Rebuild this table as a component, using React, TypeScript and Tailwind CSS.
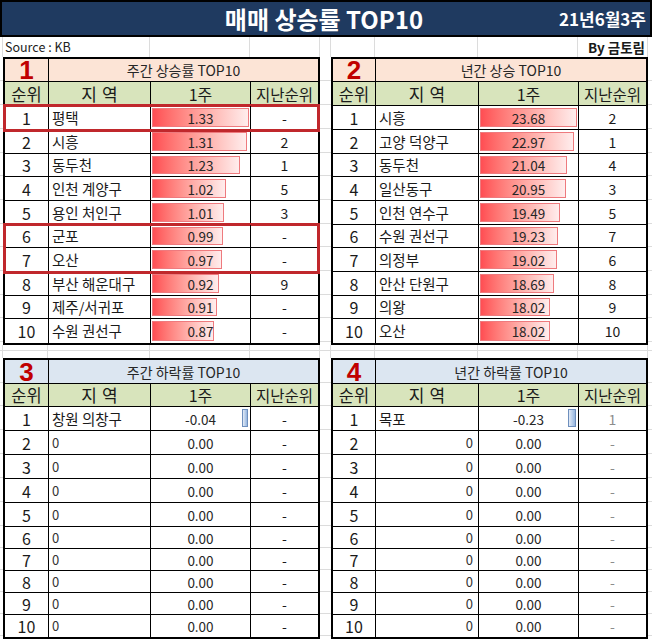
import React from 'react';

type Row = { rank: number; region: string; value: string; bar?: number; neg?: number; prev: string };

const H_TOP = ['h-[24px]', 'h-[24px]', 'h-[23px]', 'h-[24px]', 'h-[24px]', 'h-[23px]', 'h-[24px]', 'h-[24px]', 'h-[23px]', 'h-[24px]'];
const H_BOT = ['h-[24px]', 'h-[24px]', 'h-[24px]', 'h-[24px]', 'h-[24px]', 'h-[22px]', 'h-[22px]', 'h-[22px]', 'h-[22px]', 'h-[22px]'];

const COLS_L = ['w-[44px]', 'w-[102px]', 'w-[100px]'];
const COLS_R = ['w-[43px]', 'w-[103px]', 'w-[100px]'];

const t1: Row[] = [
  { rank: 1, region: '평택', value: '1.33', bar: 97, prev: '-' },
  { rank: 2, region: '시흥', value: '1.31', bar: 95, prev: '2' },
  { rank: 3, region: '동두천', value: '1.23', bar: 88, prev: '1' },
  { rank: 4, region: '인천 계양구', value: '1.02', bar: 74, prev: '5' },
  { rank: 5, region: '용인 처인구', value: '1.01', bar: 72, prev: '3' },
  { rank: 6, region: '군포', value: '0.99', bar: 71, prev: '-' },
  { rank: 7, region: '오산', value: '0.97', bar: 70, prev: '-' },
  { rank: 8, region: '부산 해운대구', value: '0.92', bar: 67, prev: '9' },
  { rank: 9, region: '제주/서귀포', value: '0.91', bar: 65, prev: '-' },
  { rank: 10, region: '수원 권선구', value: '0.87', bar: 62, prev: '-' },
];

const t2: Row[] = [
  { rank: 1, region: '시흥', value: '23.68', bar: 97, prev: '2' },
  { rank: 2, region: '고양 덕양구', value: '22.97', bar: 94, prev: '1' },
  { rank: 3, region: '동두천', value: '21.04', bar: 87, prev: '4' },
  { rank: 4, region: '일산동구', value: '20.95', bar: 86, prev: '3' },
  { rank: 5, region: '인천 연수구', value: '19.49', bar: 80, prev: '5' },
  { rank: 6, region: '수원 권선구', value: '19.23', bar: 78, prev: '7' },
  { rank: 7, region: '의정부', value: '19.02', bar: 77, prev: '6' },
  { rank: 8, region: '안산 단원구', value: '18.69', bar: 74, prev: '8' },
  { rank: 9, region: '의왕', value: '18.02', bar: 70, prev: '9' },
  { rank: 10, region: '오산', value: '18.02', bar: 70, prev: '10' },
];

const zeros = (first: Row): Row[] => [
  first,
  ...Array.from({ length: 9 }, (_, i) => ({ rank: i + 2, region: '0', value: '0.00', prev: '-' })),
];

const t3 = zeros({ rank: 1, region: '창원 의창구', value: '-0.04', neg: 6, prev: '-' });
const t4 = zeros({ rank: 1, region: '목포', value: '-0.23', neg: 8, prev: '1' });

function DataRow({
  row,
  h,
  cols,
  last,
  regionRight,
  muted,
}: {
  row: Row;
  h: string;
  cols: string[];
  last: boolean;
  regionRight?: boolean;
  muted?: boolean;
}) {
  const isZero = row.region === '0';
  const rightAlignZero = regionRight && isZero;
  return (
    <div className={`flex ${h} ${last ? '' : 'border-b border-black'} bg-white`}>
      <div className={`${cols[0]} shrink-0 border-r border-black flex items-center justify-center text-[16px] leading-[20px]`}>{row.rank}</div>
      <div
        className={`${cols[1]} shrink-0 border-r border-black flex items-center whitespace-nowrap leading-[20px] ${
          isZero ? 'text-[13px] text-[#333]' : 'text-[14.5px]'
        } ${rightAlignZero ? 'justify-end pr-[5px]' : 'pl-[3px]'}`}
      >
        {row.region}
      </div>
      <div className={`${cols[2]} shrink-0 border-r border-black relative flex items-center justify-center text-[13.5px] leading-[20px]`}>
        {row.bar ? (
          <div
            className="absolute left-[1px] top-[2px] bottom-[2px] border border-[#ee7a7e] bg-linear-to-r from-[#ff4d53] to-[#ffeded]"
            style={{ width: row.bar }}
          />
        ) : null}
        {row.neg ? (
          <div
            className="absolute right-[2px] top-[2px] bottom-[3px] border border-[#6e8fbd] bg-linear-to-r from-[#e3ebf6] to-[#96b6e0]"
            style={{ width: row.neg }}
          />
        ) : null}
        <span className="relative text-[#262626]">{row.value}</span>
      </div>
      <div className={`flex-1 flex items-center justify-center text-[14px] leading-[20px] ${muted ? 'text-[#8c8c8c]' : ''}`}>{row.prev}</div>
    </div>
  );
}

function Table({
  num,
  title,
  titleBg,
  titleH,
  headH,
  rows,
  heights,
  cols,
  regionRight,
  muted,
  boxes = [],
}: {
  num: string;
  title: string;
  titleBg: string;
  titleH: string;
  headH: string;
  rows: Row[];
  heights: string[];
  cols: string[];
  regionRight?: boolean;
  muted?: boolean;
  boxes?: number[][];
}) {
  const segs: React.ReactNode[] = [];
  let i = 0;
  while (i < rows.length) {
    const box = boxes.find((b) => b[0] === i);
    if (box) {
      const inner: React.ReactNode[] = [];
      for (let k = box[0]; k <= box[1]; k++) {
        inner.push(
          <DataRow key={k} row={rows[k]} h={heights[k]} cols={cols} last={k === rows.length - 1} regionRight={regionRight} muted={muted} />
        );
      }
      segs.push(
        <div key={`b${i}`} className="relative z-10 outline-[3px] outline-solid outline-[#c0282c] outline-offset-[-1px]">
          {inner}
        </div>
      );
      i = box[1] + 1;
    } else {
      segs.push(
        <DataRow key={i} row={rows[i]} h={heights[i]} cols={cols} last={i === rows.length - 1} regionRight={regionRight} muted={muted} />
      );
      i++;
    }
  }
  return (
    <div className="w-[317px] shrink-0 border-2 border-black flex flex-col bg-white">
      <div className={`flex ${titleH} border-b border-black ${titleBg}`}>
        <div className={`${cols[0]} shrink-0 border-r border-black flex items-center justify-center`}>
          <span className="text-[#c00000] font-bold text-[26px] leading-[19px] pt-[1px] font-['Liberation_Sans',sans-serif]">{num}</span>
        </div>
        <div className="flex-1 flex items-center justify-center text-[14px] leading-[20px] text-[#262626]">{title}</div>
      </div>
      <div className={`flex ${headH} border-b border-black bg-[#d8e4bc]`}>
        <div className={`${cols[0]} shrink-0 border-r border-black flex items-center justify-center text-[16.5px] leading-[20px]`}>순위</div>
        <div className={`${cols[1]} shrink-0 border-r border-black flex items-center justify-center text-[17px] leading-[20px] tracking-[5px] pl-[5px]`}>
          지역
        </div>
        <div className={`${cols[2]} shrink-0 border-r border-black flex items-center justify-center text-[16px] leading-[20px]`}>1주</div>
        <div className="flex-1 flex items-center justify-center text-[15.5px] leading-[20px] whitespace-nowrap">지난순위</div>
      </div>
      {segs}
    </div>
  );
}

function GapCol({ w, heights }: { w: string; heights: string[] }) {
  return (
    <div className={`${w} shrink-0 flex flex-col`}>
      <div className="h-[1px]" />
      {heights.map((h, k) => (
        <div key={k} className={`${h} border-b border-[#dcdcdc]`} />
      ))}
    </div>
  );
}

const GRID_W = ['w-[3px]', 'w-[45px]', 'w-[102px]', 'w-[100px]', 'w-[70px]', 'w-[11px]', 'w-[44px]', 'w-[103px]', 'w-[100px]', 'w-[70px]'];

function GridLineRow({ h, bottom }: { h: string; bottom?: boolean }) {
  return (
    <div className={`flex ${h} ${bottom ? 'border-b border-[#dcdcdc]' : ''}`}>
      {GRID_W.map((w, k) => (
        <div key={k} className={`${w} shrink-0 border-r border-[#dcdcdc]`} />
      ))}
      <div className="flex-1" />
    </div>
  );
}

export default function App() {
  const topH = ['h-[23px]', 'h-[24px]', ...H_TOP];
  const botH = ['h-[24px]', 'h-[23px]', ...H_BOT];
  return (
    <div className="w-[652px] h-[642px] bg-white overflow-hidden text-[#1a1a1a] font-['Noto_Sans_CJK_KR','Noto_Sans',sans-serif]">
      <div className="h-[37px] bg-[#1f3a60] border-2 border-black flex items-center">
        <div className="flex-1" />
        <div className="text-white font-bold text-[24px] leading-none">매매 상승률 TOP10</div>
        <div className="flex-1 flex justify-end pr-[4px]">
          <span className="text-white font-bold text-[17px] leading-none">21년6월3주</span>
        </div>
      </div>

      <div className="h-[20px] flex">
        <div className="w-[3px] shrink-0 border-r border-[#dcdcdc]" />
        <div className="w-[147px] shrink-0 border-r border-[#dcdcdc] flex items-center pl-[2px] text-[12.5px] text-[#222]">
          Source : KB
        </div>
        <div className="w-[100px] shrink-0 border-r border-[#dcdcdc]" />
        <div className="w-[70px] shrink-0 border-r border-[#dcdcdc]" />
        <div className="w-[11px] shrink-0 border-r border-[#dcdcdc]" />
        <div className="w-[44px] shrink-0 border-r border-[#dcdcdc]" />
        <div className="w-[103px] shrink-0 border-r border-[#dcdcdc]" />
        <div className="w-[100px] shrink-0 border-r border-[#dcdcdc]" />
        <div className="w-[70px] shrink-0 border-r border-[#dcdcdc] flex items-center justify-end pr-[2px] font-bold text-[13.5px] whitespace-nowrap">
          By 금토림
        </div>
        <div className="flex-1" />
      </div>

      <div className="flex">
        <GapCol w="w-[3px]" heights={topH} />
        <Table
          num="1"
          title="주간 상승률 TOP10"
          titleBg="bg-[#fce4d6]"
          titleH="h-[23px]"
          headH="h-[24px]"
          rows={t1}
          heights={H_TOP}
          cols={COLS_L}
          boxes={[
            [0, 0],
            [5, 6],
          ]}
        />
        <GapCol w="w-[11px]" heights={topH} />
        <Table
          num="2"
          title="년간 상승 TOP10"
          titleBg="bg-[#fce4d6]"
          titleH="h-[23px]"
          headH="h-[24px]"
          rows={t2}
          heights={H_TOP}
          cols={COLS_R}
        />
        <GapCol w="flex-1" heights={topH} />
      </div>

      <GridLineRow h="h-[6px]" bottom />
      <GridLineRow h="h-[7px]" />

      <div className="flex">
        <GapCol w="w-[3px]" heights={botH} />
        <Table
          num="3"
          title="주간 하락률 TOP10"
          titleBg="bg-[#dce6f1]"
          titleH="h-[24px]"
          headH="h-[23px]"
          rows={t3}
          heights={H_BOT}
          cols={COLS_L}
        />
        <GapCol w="w-[11px]" heights={botH} />
        <Table
          num="4"
          title="년간 하락률 TOP10"
          titleBg="bg-[#dce6f1]"
          titleH="h-[24px]"
          headH="h-[23px]"
          rows={t4}
          heights={H_BOT}
          cols={COLS_R}
          regionRight
          muted
        />
        <GapCol w="flex-1" heights={botH} />
      </div>
    </div>
  );
}
